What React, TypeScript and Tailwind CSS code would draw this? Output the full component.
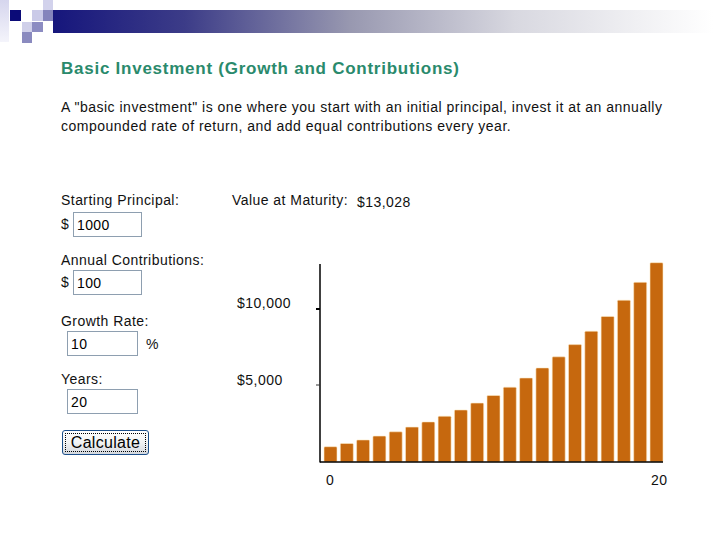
import React from 'react';

const values = Array.from({ length: 21 }, (_, n) => 1000 * 1.1 ** n + 1100 * (1.1 ** n - 1));

const HeaderArt: React.FC = () => (
  <svg width="720" height="43" viewBox="0 0 720 43" className="block">
    <defs>
      <linearGradient id="bar" x1="0" x2="1" y1="0" y2="0">
        <stop offset="0" stopColor="#16167c" />
        <stop offset="0.2" stopColor="#3c3c88" />
        <stop offset="0.45" stopColor="#9898b0" />
        <stop offset="0.7" stopColor="#d8d8e0" />
        <stop offset="1" stopColor="#ffffff" />
      </linearGradient>
      <linearGradient id="col" x1="0" x2="0" y1="0" y2="1">
        <stop offset="0" stopColor="#d6d6ee" />
        <stop offset="1" stopColor="#f4f4fb" />
      </linearGradient>
    </defs>
    <rect x="0" y="0" width="9" height="42" fill="url(#col)" />
    <rect x="53" y="10" width="660" height="23" fill="url(#bar)" />
    <rect x="10" y="10" width="11" height="11" fill="#0b0b78" />
    <rect x="32" y="10" width="11" height="11" fill="#cacae8" />
    <rect x="43" y="0" width="10" height="10" fill="#d2d2ec" />
    <rect x="43" y="10" width="10" height="11" fill="#8484bc" />
    <rect x="22" y="22" width="10" height="10" fill="#d0d0ea" />
    <rect x="32" y="22" width="11" height="10" fill="#8c8cc2" />
    <rect x="22" y="32" width="10" height="11" fill="#8a8abf" />
  </svg>
);

const Chart: React.FC = () => {
  const base = 205;
  const k = 0.0153;
  return (
    <svg width="440" height="235" viewBox="0 0 440 235" className="block">
      {values.map((v, i) => {
        const h = v * k;
        return (
          <rect
            key={i}
            x={92 + i * 16.3}
            y={base - h}
            width={13}
            height={h}
            rx={1}
            fill="#c6680e"
            stroke="#fde9c4"
            strokeWidth={0.6}
          />
        );
      })}
      <line x1="88" y1="7" x2="88" y2={base + 0.5} stroke="#000" strokeWidth="1.5" />
      <line x1="88" y1={base} x2="431" y2={base} stroke="#000" strokeWidth="1.5" />
      <line x1="84" y1="52" x2="88" y2="52" stroke="#000" strokeWidth="2" />
      <line x1="84" y1="128" x2="88" y2="128" stroke="#333" strokeWidth="1" />
      <g fontFamily="'Liberation Sans', Arial, sans-serif" fontSize="14" fill="#111" letterSpacing="0.5">
        <text x="5" y="51">$10,000</text>
        <text x="5" y="128">$5,000</text>
        <text x="94" y="228">0</text>
        <text x="419" y="228">20</text>
      </g>
    </svg>
  );
};

const Field: React.FC<{ value: string; className?: string }> = ({ value, className }) => (
  <input
    readOnly
    value={value}
    className={`h-[25px] border border-[#8e9fb0] bg-white px-[3px] text-[14px] tracking-[0.4px] text-black outline-none ${className ?? ''}`}
  />
);

export default function App() {
  return (
    <div className="w-[720px] h-[540px] bg-white overflow-hidden font-['Liberation_Sans',Arial,sans-serif] text-[#111]">
      <HeaderArt />

      <h1 className="pl-[61px] mt-[16px] text-[17px] leading-[20px] font-bold tracking-[0.75px] text-[#2a8a6c] whitespace-nowrap">
        Basic Investment (Growth and Contributions)
      </h1>

      <p className="pl-[61px] mt-[19px] text-[14px] leading-[19px] tracking-[0.5px] whitespace-nowrap">
        A "basic investment" is one where you start with an initial principal, invest it at an annually
        <br />
        compounded rate of return, and add equal contributions every year.
      </p>

      <div className="flex pl-[61px] mt-[56px] text-[14px] leading-[17px] tracking-[0.45px]">
        {/* inputs */}
        <div className="w-[171px]">
          <div>Starting Principal:</div>
          <div className="flex items-center mt-[3px]">
            <span className="w-[12px]">$</span>
            <Field value="1000" className="w-[69px]" />
          </div>

          <div className="mt-[15px]">Annual Contributions:</div>
          <div className="flex items-center mt-[1px]">
            <span className="w-[12px]">$</span>
            <Field value="100" className="w-[69px]" />
          </div>

          <div className="mt-[18px]">Growth Rate:</div>
          <div className="flex items-center mt-[1px] pl-[6px]">
            <Field value="10" className="w-[71px]" />
            <span className="ml-[8px] mt-[2px]">%</span>
          </div>

          <div className="mt-[15px]">Years:</div>
          <div className="flex items-center mt-[1px] pl-[6px]">
            <Field value="20" className="w-[71px]" />
          </div>

          <button className="mt-[16px] ml-[1px] flex h-[25px] w-[87px] items-center justify-center rounded-[3px] border border-[#1c4f8a] bg-gradient-to-b from-white via-[#f2f3f4] to-[#d4d8de] p-[2px]">
            <span className="flex h-full w-full items-center justify-center border border-dotted border-black text-[16px] leading-none tracking-[0.3px] text-black">
              Calculate
            </span>
          </button>
        </div>

        {/* result */}
        <div>
          <div className="flex whitespace-nowrap">
            <span>Value at Maturity:</span>
            <span className="ml-[9px] mt-[2px]">$13,028</span>
          </div>
          <div className="mt-[46px]">
            <Chart />
          </div>
        </div>
      </div>
    </div>
  );
}
